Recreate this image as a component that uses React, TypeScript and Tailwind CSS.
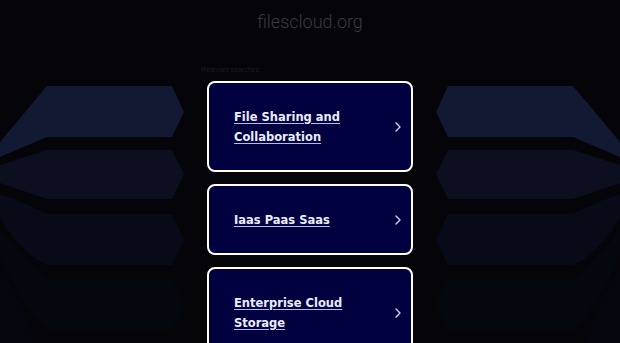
const searches = [
  "File Sharing and Collaboration",
  "Iaas Paas Saas",
  "Enterprise Cloud Storage",
];

function Backdrop() {
  // left half of the fan drawing, mirrored for the right half
  const shapes = (
    <>
      <path d="M47 86H172L184 112L172 137H47L0 157V142Z" fill="#121932" />
      <path d="M47 150H172L184 174L172 199H47L0 183V165Z" fill="#0b0f1f" />
      <path d="M47 214H172L184 240L172 265H47Q22 254 0 218V194Q24 202 47 214Z" fill="#080a18" />
      <path d="M47 280H172L184 305L172 330H47Q22 306 0 256V231Q28 262 47 280Z" fill="#05070f" />
      <path d="M0 268Q24 300 33 343H0Z" fill="#05060d" />
      <path d="M47 345H172L184 370L172 395H47Q30 370 14 343H47Z" fill="#05060d" />
    </>
  );
  return (
    <svg
      className="absolute left-0 top-0 h-[343px] w-[620px]"
      viewBox="0 0 620 343"
    >
      {shapes}
      <g transform="translate(620 0) scale(-1 1)">{shapes}</g>
    </svg>
  );
}

function Chevron() {
  return (
    <svg width="6" height="10" viewBox="0 0 6 10" className="shrink-0">
      <path
        d="M1 1L5 5L1 9"
        fill="none"
        stroke="#d0d0f5"
        strokeWidth="1.4"
        strokeLinecap="round"
        strokeLinejoin="round"
      />
    </svg>
  );
}

export default function App() {
  return (
    <div className="relative h-screen overflow-hidden bg-[#050509]">
      <Backdrop />
      <div className="relative flex flex-col items-center">
        <h1
          className="pt-[10px] text-[18px] leading-[23px] font-light text-[#3a3a44]"
          style={{ fontFamily: "Roboto, 'Liberation Sans', sans-serif" }}
        >
          filescloud.org
        </h1>
        <div className="mt-[31.5px] w-[218px]">
          <p
            className="text-[7px] leading-[9px] text-[#1c1c26]"
            style={{ fontFamily: "'Liberation Sans', Arial, sans-serif" }}
          >
            Relevant searches
          </p>
          <div className="mt-[7.5px] flex flex-col gap-3 px-[6px]">
            {searches.map((s) => (
              <a
                key={s}
                href="#"
                className="flex items-center justify-between rounded-[8px] border-2 border-white bg-[#010140] py-[23.5px] pl-[25px] pr-[10px]"
              >
                <span
                  className="max-w-[140px] text-[11.5px] leading-[20px] font-bold text-[#ececff] underline decoration-[#b8b8ee] underline-offset-2"
                  style={{ fontFamily: "'DejaVu Sans', Verdana, sans-serif" }}
                >
                  {s}
                </span>
                <Chevron />
              </a>
            ))}
          </div>
        </div>
      </div>
    </div>
  );
}
